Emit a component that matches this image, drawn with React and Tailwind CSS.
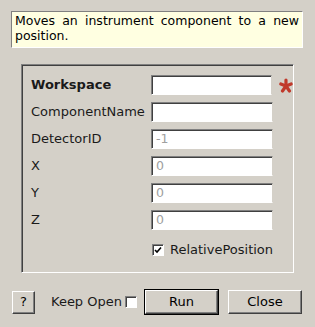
import React from 'react';

const font = { fontFamily: '"DejaVu Sans", "Liberation Sans", sans-serif' };

const Field = ({ value }) => (
  <div className="w-[122px] h-[20px] bg-white border border-t-[#808080] border-l-[#808080] border-b-white border-r-[#d4d0c8] shadow-[inset_1px_1px_0_#404040] flex items-center pl-[4px] text-[12.5px] text-[#a0a0a0]">
    {value}
  </div>
);

const Check = ({ checked }) => (
  <div className="w-[12px] h-[12px] bg-white border border-t-[#808080] border-l-[#808080] border-b-white border-r-white shadow-[inset_1px_1px_0_#404040] flex items-center justify-center">
    {checked && (
      <svg width="8" height="8" viewBox="0 0 8 8">
        <path d="M1 4 L3 6 L7 1.5" stroke="#000" strokeWidth="1.6" fill="none" />
      </svg>
    )}
  </div>
);

const Button = ({ children, className = '', isDefault }) => (
  <div className={`${isDefault ? 'border border-black' : ''} ${className}`}>
    <div className="h-full border border-t-white border-l-white border-b-[#404040] border-r-[#404040] shadow-[inset_-1px_-1px_0_#808080] bg-[#d4d0c8] flex items-center justify-center text-[13px] text-black">
      {children}
    </div>
  </div>
);

const Asterisk = () => (
  <svg width="14" height="15" viewBox="0 0 14 15" className="ml-[7px] mt-[1px]">
    <g stroke="#c0392b" strokeWidth="3.2" strokeLinecap="round">
      <line x1="7" y1="8" x2="7" y2="2" />
      <line x1="7" y1="8" x2="1.8" y2="6" />
      <line x1="7" y1="8" x2="12.2" y2="6" />
      <line x1="7" y1="8" x2="3.5" y2="13" />
      <line x1="7" y1="8" x2="10.5" y2="13" />
    </g>
  </svg>
);

const rows = [
  { label: 'Workspace', bold: true, value: '', required: true },
  { label: 'ComponentName', value: '' },
  { label: 'DetectorID', value: '-1' },
  { label: 'X', value: '0' },
  { label: 'Y', value: '0' },
  { label: 'Z', value: '0' },
];

export default function App() {
  return (
    <div className="w-[315px] h-[327px] bg-[#d4d0c8] text-[#1a1a1a] flex flex-col" style={font}>
      {/* description */}
      <div className="mt-[11px] ml-[11px] w-[292px] h-[37px] bg-[#ffffe1] border border-t-[#808080] border-l-[#808080] border-b-white border-r-white px-[3px] pt-[1px] text-[12.5px] leading-[15px] text-black text-justify">
        Moves an instrument component to a new position.
      </div>

      {/* properties group */}
      <div className="mt-[16px] ml-[21px] w-[273px] h-[209px] border border-t-[#808080] border-l-[#808080] border-b-white border-r-white shadow-[inset_1px_1px_0_#404040] pt-[10px] pl-[9px] flex flex-col">
        <div className="flex flex-col gap-[7px]">
          {rows.map((r) => (
            <div key={r.label} className="flex items-center h-[20px]">
              <span className={`w-[120px] text-[13px] ${r.bold ? 'font-bold' : ''}`}>{r.label}</span>
              <Field value={r.value} />
              {r.required && <Asterisk />}
            </div>
          ))}
        </div>
        <div className="flex items-center mt-[10px] ml-[121px] gap-[6px] text-[13px]">
          <Check checked />
          <span>RelativePosition</span>
        </div>
      </div>

      {/* buttons */}
      <div className="mt-[16px] flex items-center">
        <Button className="ml-[12px] w-[23px] h-[23px]">?</Button>
        <span className="ml-[16px] text-[13px] w-[74px]">Keep Open</span>
        <Check />
        <Button isDefault className="ml-[7px] w-[75px] h-[26px]">Run</Button>
        <Button className="ml-[9px] w-[74px] h-[24px]">Close</Button>
      </div>
    </div>
  );
}
